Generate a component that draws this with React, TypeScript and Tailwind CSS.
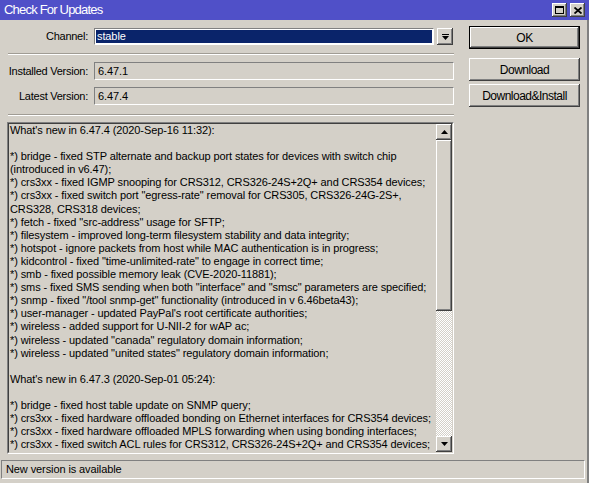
const LINES = [
  "What's new in 6.47.4 (2020-Sep-16 11:32):",
  "",
  "*) bridge - fixed STP alternate and backup port states for devices with switch chip",
  "(introduced in v6.47);",
  "*) crs3xx - fixed IGMP snooping for CRS312, CRS326-24S+2Q+ and CRS354 devices;",
  '*) crs3xx - fixed switch port "egress-rate" removal for CRS305, CRS326-24G-2S+,',
  "CRS328, CRS318 devices;",
  '*) fetch - fixed "src-address" usage for SFTP;',
  "*) filesystem - improved long-term filesystem stability and data integrity;",
  "*) hotspot - ignore packets from host while MAC authentication is in progress;",
  '*) kidcontrol - fixed "time-unlimited-rate" to engage in correct time;',
  "*) smb - fixed possible memory leak (CVE-2020-11881);",
  '*) sms - fixed SMS sending when both "interface" and "smsc" parameters are specified;',
  '*) snmp - fixed "/tool snmp-get" functionality (introduced in v 6.46beta43);',
  "*) user-manager - updated PayPal's root certificate authorities;",
  "*) wireless - added support for U-NII-2 for wAP ac;",
  '*) wireless - updated "canada" regulatory domain information;',
  '*) wireless - updated "united states" regulatory domain information;',
  "",
  "What's new in 6.47.3 (2020-Sep-01 05:24):",
  "",
  "*) bridge - fixed host table update on SNMP query;",
  "*) crs3xx - fixed hardware offloaded bonding on Ethernet interfaces for CRS354 devices;",
  "*) crs3xx - fixed hardware offloaded MPLS forwarding when using bonding interfaces;",
  "*) crs3xx - fixed switch ACL rules for CRS312, CRS326-24S+2Q+ and CRS354 devices;",
];

// classic raised / sunken edges
const raised = "shadow-[inset_-1px_-1px_0_#404040,inset_1px_1px_0_#ffffff,inset_-2px_-2px_0_#808080]";
const sunken = "border border-t-[#808080] border-l-[#808080] border-b-white border-r-white";

function Label({ children }: { children: string }) {
  return <div className="flex w-[81px] justify-end whitespace-nowrap tracking-[-0.25px]">{children}</div>;
}

function Field({ label, value }: { label: string; value: string }) {
  return (
    <div className="flex h-[18px] items-center">
      <Label>{label}</Label>
      <div className={`ml-[6px] flex h-full flex-1 items-center pl-[3px] ${sunken}`}>{value}</div>
    </div>
  );
}

function Separator() {
  return <div className="ml-[1px] h-[2px] border-t border-b border-t-[#a09c94] border-b-white" />;
}

function Btn({ children, main }: { children: string; main?: boolean }) {
  if (main) {
    return (
      <div className="h-[23px] border border-black">
        <div className={`flex h-full items-center justify-center text-[12px] tracking-[-0.4px] ${raised}`}>{children}</div>
      </div>
    );
  }
  return (
    <div className={`flex h-[23px] items-center justify-center text-[12px] tracking-[-0.5px] ${raised}`}>{children}</div>
  );
}

function Arrow({ down }: { down?: boolean }) {
  return (
    <svg width="7" height="4" viewBox="0 0 7 4">
      {down ? <polygon points="0,0 7,0 3.5,4" fill="#000" /> : <polygon points="0,4 7,4 3.5,0" fill="#000" />}
    </svg>
  );
}

export default function App() {
  return (
    <div className="flex h-[483px] w-[589px] flex-col bg-[#d4d0c8] font-['Liberation_Sans',Arial,sans-serif] text-[11px] tracking-[-0.1px] text-black">
      {/* title bar */}
      <div className="flex h-[20px] items-center justify-between bg-[#5050c8] pl-[4px] pr-[4px]">
        <div className="text-[13px] tracking-[-0.8px] text-white">Check For Updates</div>
        <div className="flex gap-[3px]">
          <div className={`flex h-[14px] w-[15px] items-center justify-center bg-[#d4d0c8] ${raised}`}>
            <div className="h-[8px] w-[9px] border border-t-2 border-black" />
          </div>
          <div className={`flex h-[14px] w-[15px] items-center justify-center bg-[#d4d0c8] ${raised}`}>
            <svg width="8" height="7" viewBox="0 0 8 7">
              <path d="M0.5 0.5 L7.5 6.5 M7.5 0.5 L0.5 6.5" stroke="#000" strokeWidth="1.8" />
            </svg>
          </div>
        </div>
      </div>

      <div className="flex border-r-2 border-r-[#808080]">
        {/* left column */}
        <div className="ml-[7px] mt-[8px] w-[447px]">
          <div className="flex h-[17px] items-center">
            <Label>Channel:</Label>
            <div className={`ml-[6px] h-full w-[340px] bg-white p-[1px] ${sunken}`}>
              <div className="flex h-full items-center bg-[#0a246a] pl-[1px] text-white">stable</div>
            </div>
            <div className={`ml-[3px] flex h-full w-[16px] flex-col items-center justify-center gap-[1px] ${raised}`}>
              <div className="h-[1px] w-[7px] bg-black" />
              <Arrow down />
            </div>
          </div>

          <div className="mt-[8px]">
            <Separator />
          </div>

          <div className="mt-[7px]">
            <Field label="Installed Version:" value="6.47.1" />
          </div>
          <div className="mt-[7px]">
            <Field label="Latest Version:" value="6.47.4" />
          </div>

          <div className="mt-[9px]">
            <Separator />
          </div>

          {/* changelog */}
          <div className={`mt-[6px] h-[332px] ${sunken}`}>
            <div className="flex h-full border border-t-[#404040] border-l-[#404040] border-b-[#d4d0c8] border-r-[#d4d0c8]">
              <div className="flex-1 overflow-hidden pl-[1px] leading-[13.1px]">
                {LINES.map((l, i) => (
                  <div key={i} className="h-[13.1px] whitespace-pre">
                    {l}
                  </div>
                ))}
              </div>
              <div className="flex w-[16px] flex-col">
                <div className={`flex h-[16px] items-center justify-center ${raised}`}>
                  <Arrow />
                </div>
                <div className={`h-[171px] ${raised}`} />
                <div className="flex-1 bg-[repeating-conic-gradient(#ffffff_0%_25%,#d4d0c8_0%_50%)] bg-[length:2px_2px]" />
                <div className={`flex h-[16px] items-center justify-center ${raised}`}>
                  <Arrow down />
                </div>
              </div>
            </div>
          </div>
        </div>

        {/* right column */}
        <div className="ml-[15px] mt-[6px] flex w-[111px] flex-col">
          <Btn main>OK</Btn>
          <div className="mt-[9px]">
            <Btn>Download</Btn>
          </div>
          <div className="mt-[3px]">
            <Btn>Download&amp;Install</Btn>
          </div>
        </div>
      </div>

      {/* status bar */}
      <div className="flex flex-1 flex-col border-r-2 border-r-[#808080] pt-[6px]">
        <div className={`ml-[1px] flex h-[19px] w-[584px] items-center pl-[4px] ${sunken}`}>New version is available</div>
      </div>
    </div>
  );
}
